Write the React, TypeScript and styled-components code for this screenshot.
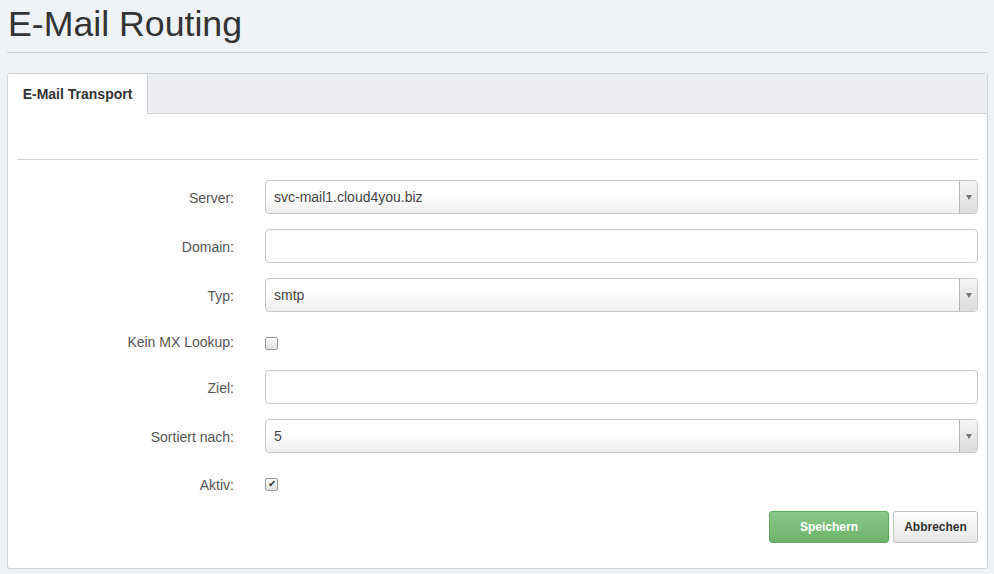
import styled, { createGlobalStyle } from "styled-components"

const Global = createGlobalStyle`
  body {
    margin: 0;
    background: #eff2f5;
    font-family: "Liberation Sans", Arial, sans-serif;
    color: #333;
  }
`

const Page = styled.div`
  padding: 0 6px 0 7px;
`

const Title = styled.h1`
  margin: 0;
  padding: 4px 0 8px 1px;
  font-size: 35.7px;
  font-weight: normal;
  line-height: 40px;
  color: #333;
  border-bottom: 1px solid #cfd3d6;
`

const Panel = styled.div`
  margin-top: 20px;
  background: #fff;
  border: 1px solid #cfd3d6;
  border-radius: 3px;
  height: 496px;
  box-sizing: border-box;
`

const TabBar = styled.div`
  display: flex;
  height: 40px;
  box-sizing: border-box;
  background: #ebedf0;
  border-bottom: 1px solid #cfd3d6;
`

const Tab = styled.div<{ $active?: boolean }>`
  width: 139px;
  display: flex;
  align-items: center;
  justify-content: center;
  font-size: 14px;
  font-weight: bold;
  color: #333;
  background: ${p => (p.$active ? "#fff" : "transparent")};
  border-right: 1px solid #cfd3d6;
  margin-bottom: ${p => (p.$active ? "-1px" : "0")};
`

const Body = styled.div`
  padding: 45px 9px 0 9px;
`

const Divider = styled.div`
  border-top: 1px solid #cfd3d6;
  margin-bottom: 20px;
`

const Row = styled.div<{ $h?: number }>`
  display: grid;
  grid-template-columns: 217px 1fr;
  column-gap: 31px;
  align-items: center;
  min-height: ${p => p.$h ?? 34}px;
  margin-bottom: 15px;
`

const Label = styled.label`
  text-align: right;
  font-size: 14px;
  color: #555;
  padding-top: 1px;
`

const Input = styled.div`
  height: 34px;
  box-sizing: border-box;
  border: 1px solid #ccc;
  border-radius: 4px;
  background: #fff;
  box-shadow: inset 0 1px 1px rgba(0, 0, 0, 0.04);
`

const Select = styled.div`
  height: 34px;
  box-sizing: border-box;
  border: 1px solid #c8c8c8;
  border-radius: 4px;
  background: linear-gradient(#fff 40%, #eeeeee);
  display: flex;
  align-items: stretch;
  font-size: 14px;
  color: #444;
`

const SelectValue = styled.div`
  flex: 1;
  display: flex;
  align-items: center;
  padding-left: 8px;
`

const SelectArrow = styled.div`
  width: 17px;
  border-left: 1px solid #b5b5b5;
  background: linear-gradient(#f4f4f4, #dcdcdc);
  border-radius: 0 3px 3px 0;
  display: flex;
  align-items: center;
  justify-content: center;
  &::after {
    content: "";
    border-left: 3.5px solid transparent;
    border-right: 3.5px solid transparent;
    border-top: 5px solid #777;
  }
`

const CheckCell = styled.div<{ $shift: number }>`
  display: flex;
  transform: translateY(${p => p.$shift}px);
`

const Check = styled.span`
  display: inline-flex;
  align-items: center;
  justify-content: center;
  width: 11px;
  height: 11px;
  border: 1px solid #9a9a9a;
  border-radius: 2px;
  background: linear-gradient(#fcfcfc, #dedede);
  font-size: 10px;
  line-height: 1;
  color: #333;
`

const Actions = styled.div`
  display: flex;
  justify-content: flex-end;
  gap: 4px;
  margin-top: -4px;
`

const Btn = styled.button<{ $primary?: boolean }>`
  height: 32px;
  padding: 0 10px;
  width: ${p => (p.$primary ? "120px" : "85px")};
  font-family: "Liberation Sans", Arial, sans-serif;
  font-size: 12px;
  font-weight: bold;
  border-radius: 3px;
  cursor: pointer;
  color: ${p => (p.$primary ? "#fff" : "#333")};
  border: 1px solid ${p => (p.$primary ? "#5fa85f" : "#c4c4c4")};
  background: ${p =>
    p.$primary
      ? "linear-gradient(#89c789, #6db46d)"
      : "linear-gradient(#ffffff, #e6e6e6)"};
`

const SelectField = ({ value }: { value: string }) => (
  <Select>
    <SelectValue>{value}</SelectValue>
    <SelectArrow />
  </Select>
)

export default function App() {
  return (
    <>
      <Global />
      <Page>
        <Title>E-Mail Routing</Title>
        <Panel>
          <TabBar>
            <Tab $active>E-Mail Transport</Tab>
          </TabBar>
          <Body>
            <Divider />
            <Row>
              <Label>Server:</Label>
              <SelectField value="svc-mail1.cloud4you.biz" />
            </Row>
            <Row>
              <Label>Domain:</Label>
              <Input />
            </Row>
            <Row>
              <Label>Typ:</Label>
              <SelectField value="smtp" />
            </Row>
            <Row $h={28}>
              <Label>Kein MX Lookup:</Label>
              <CheckCell $shift={2}><Check /></CheckCell>
            </Row>
            <Row>
              <Label>Ziel:</Label>
              <Input />
            </Row>
            <Row>
              <Label>Sortiert nach:</Label>
              <SelectField value="5" />
            </Row>
            <Row $h={32}>
              <Label>Aktiv:</Label>
              <CheckCell $shift={0}><Check>✔</Check></CheckCell>
            </Row>
            <Actions>
              <Btn $primary>Speichern</Btn>
              <Btn>Abbrechen</Btn>
            </Actions>
          </Body>
        </Panel>
      </Page>
    </>
  )
}
